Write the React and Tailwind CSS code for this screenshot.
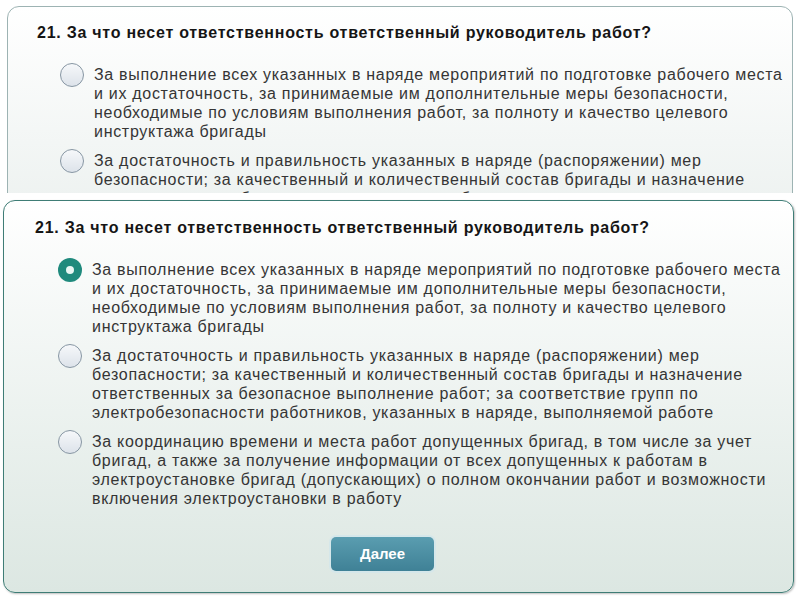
import React from "react";

const question = "21. За что несет ответственность ответственный руководитель работ?";

const answers = [
  [
    "За выполнение всех указанных в наряде мероприятий по подготовке рабочего места",
    "и их достаточность, за принимаемые им дополнительные меры безопасности,",
    "необходимые по условиям выполнения работ, за полноту и качество целевого",
    "инструктажа бригады",
  ],
  [
    "За достаточность и правильность указанных в наряде (распоряжении) мер",
    "безопасности; за качественный и количественный состав бригады и назначение",
    "ответственных за безопасное выполнение работ; за соответствие групп по",
    "электробезопасности работников, указанных в наряде, выполняемой работе",
  ],
  [
    "За координацию времени и места работ допущенных бригад, в том числе за учет",
    "бригад, а также за получение информации от всех допущенных к работам в",
    "электроустановке бригад (допускающих) о полном окончании работ и возможности",
    "включения электроустановки в работу",
  ],
];

function Radio({ checked }) {
  if (checked) {
    return (
      <span className="mt-[-2px] flex h-[24px] w-[24px] shrink-0 items-center justify-center rounded-full bg-[#1f8a7d]">
        <span className="h-[8px] w-[8px] rounded-full bg-[#e8f6f4]" />
      </span>
    );
  }
  return (
    <span className="mt-[-2px] h-[24px] w-[24px] shrink-0 rounded-full border border-[#8796a3] bg-gradient-to-b from-[#f6f8fa] to-[#dde3ea]" />
  );
}

function Option({ lines, checked }) {
  return (
    <div className="flex items-start gap-[10px]">
      <Radio checked={checked} />
      <div className="text-[16px] leading-[19px] tracking-[0.7px] text-[#353535]">
        {lines.map((l, i) => (
          <div key={i} className="whitespace-nowrap">
            {l}
          </div>
        ))}
      </div>
    </div>
  );
}

function Title() {
  return (
    <div className="whitespace-nowrap text-[16px] font-bold leading-[20px] tracking-[0.75px] text-[#151515]">
      {question}
    </div>
  );
}

export default function App() {
  return (
    <div
      className="h-[600px] w-[800px] overflow-hidden bg-white"
      style={{ fontFamily: '"Liberation Sans", Arial, sans-serif' }}
    >
      {/* Top (clipped) card */}
      <div className="ml-[7px] mt-[6px] h-[187px] w-[786px] overflow-hidden">
        <div className="h-[260px] rounded-t-[12px] border border-[#9db3b3] bg-gradient-to-b from-white to-[#e8eeec] pl-[29px] pt-[16px]">
          <Title />
          <div className="ml-[23px] mt-[22px] flex flex-col gap-[10px]">
            <Option lines={answers[0]} />
            <Option lines={answers[1]} />
          </div>
        </div>
      </div>

      {/* Bottom card */}
      <div className="ml-[3px] mt-[7px] w-[791px] rounded-[12px] border border-[#3f7d76] bg-gradient-to-b from-white to-[#dce7e2] pb-[21px] pl-[31px] pt-[17px] shadow-[1px_1px_2px_rgba(0,0,0,0.25)]">
        <Title />
        <div className="ml-[23px] mt-[22px] flex flex-col gap-[10px]">
          <Option lines={answers[0]} checked />
          <Option lines={answers[1]} />
          <Option lines={answers[2]} />
        </div>
        <div className="mt-[29px] pl-[296px]">
          <button className="h-[34px] w-[103px] rounded-[5px] bg-gradient-to-b from-[#5a9db0] to-[#3f8196] text-[15px] font-bold text-white shadow-[0_0_0_2px_#d5e7ea]">
            Далее
          </button>
        </div>
      </div>
    </div>
  );
}
